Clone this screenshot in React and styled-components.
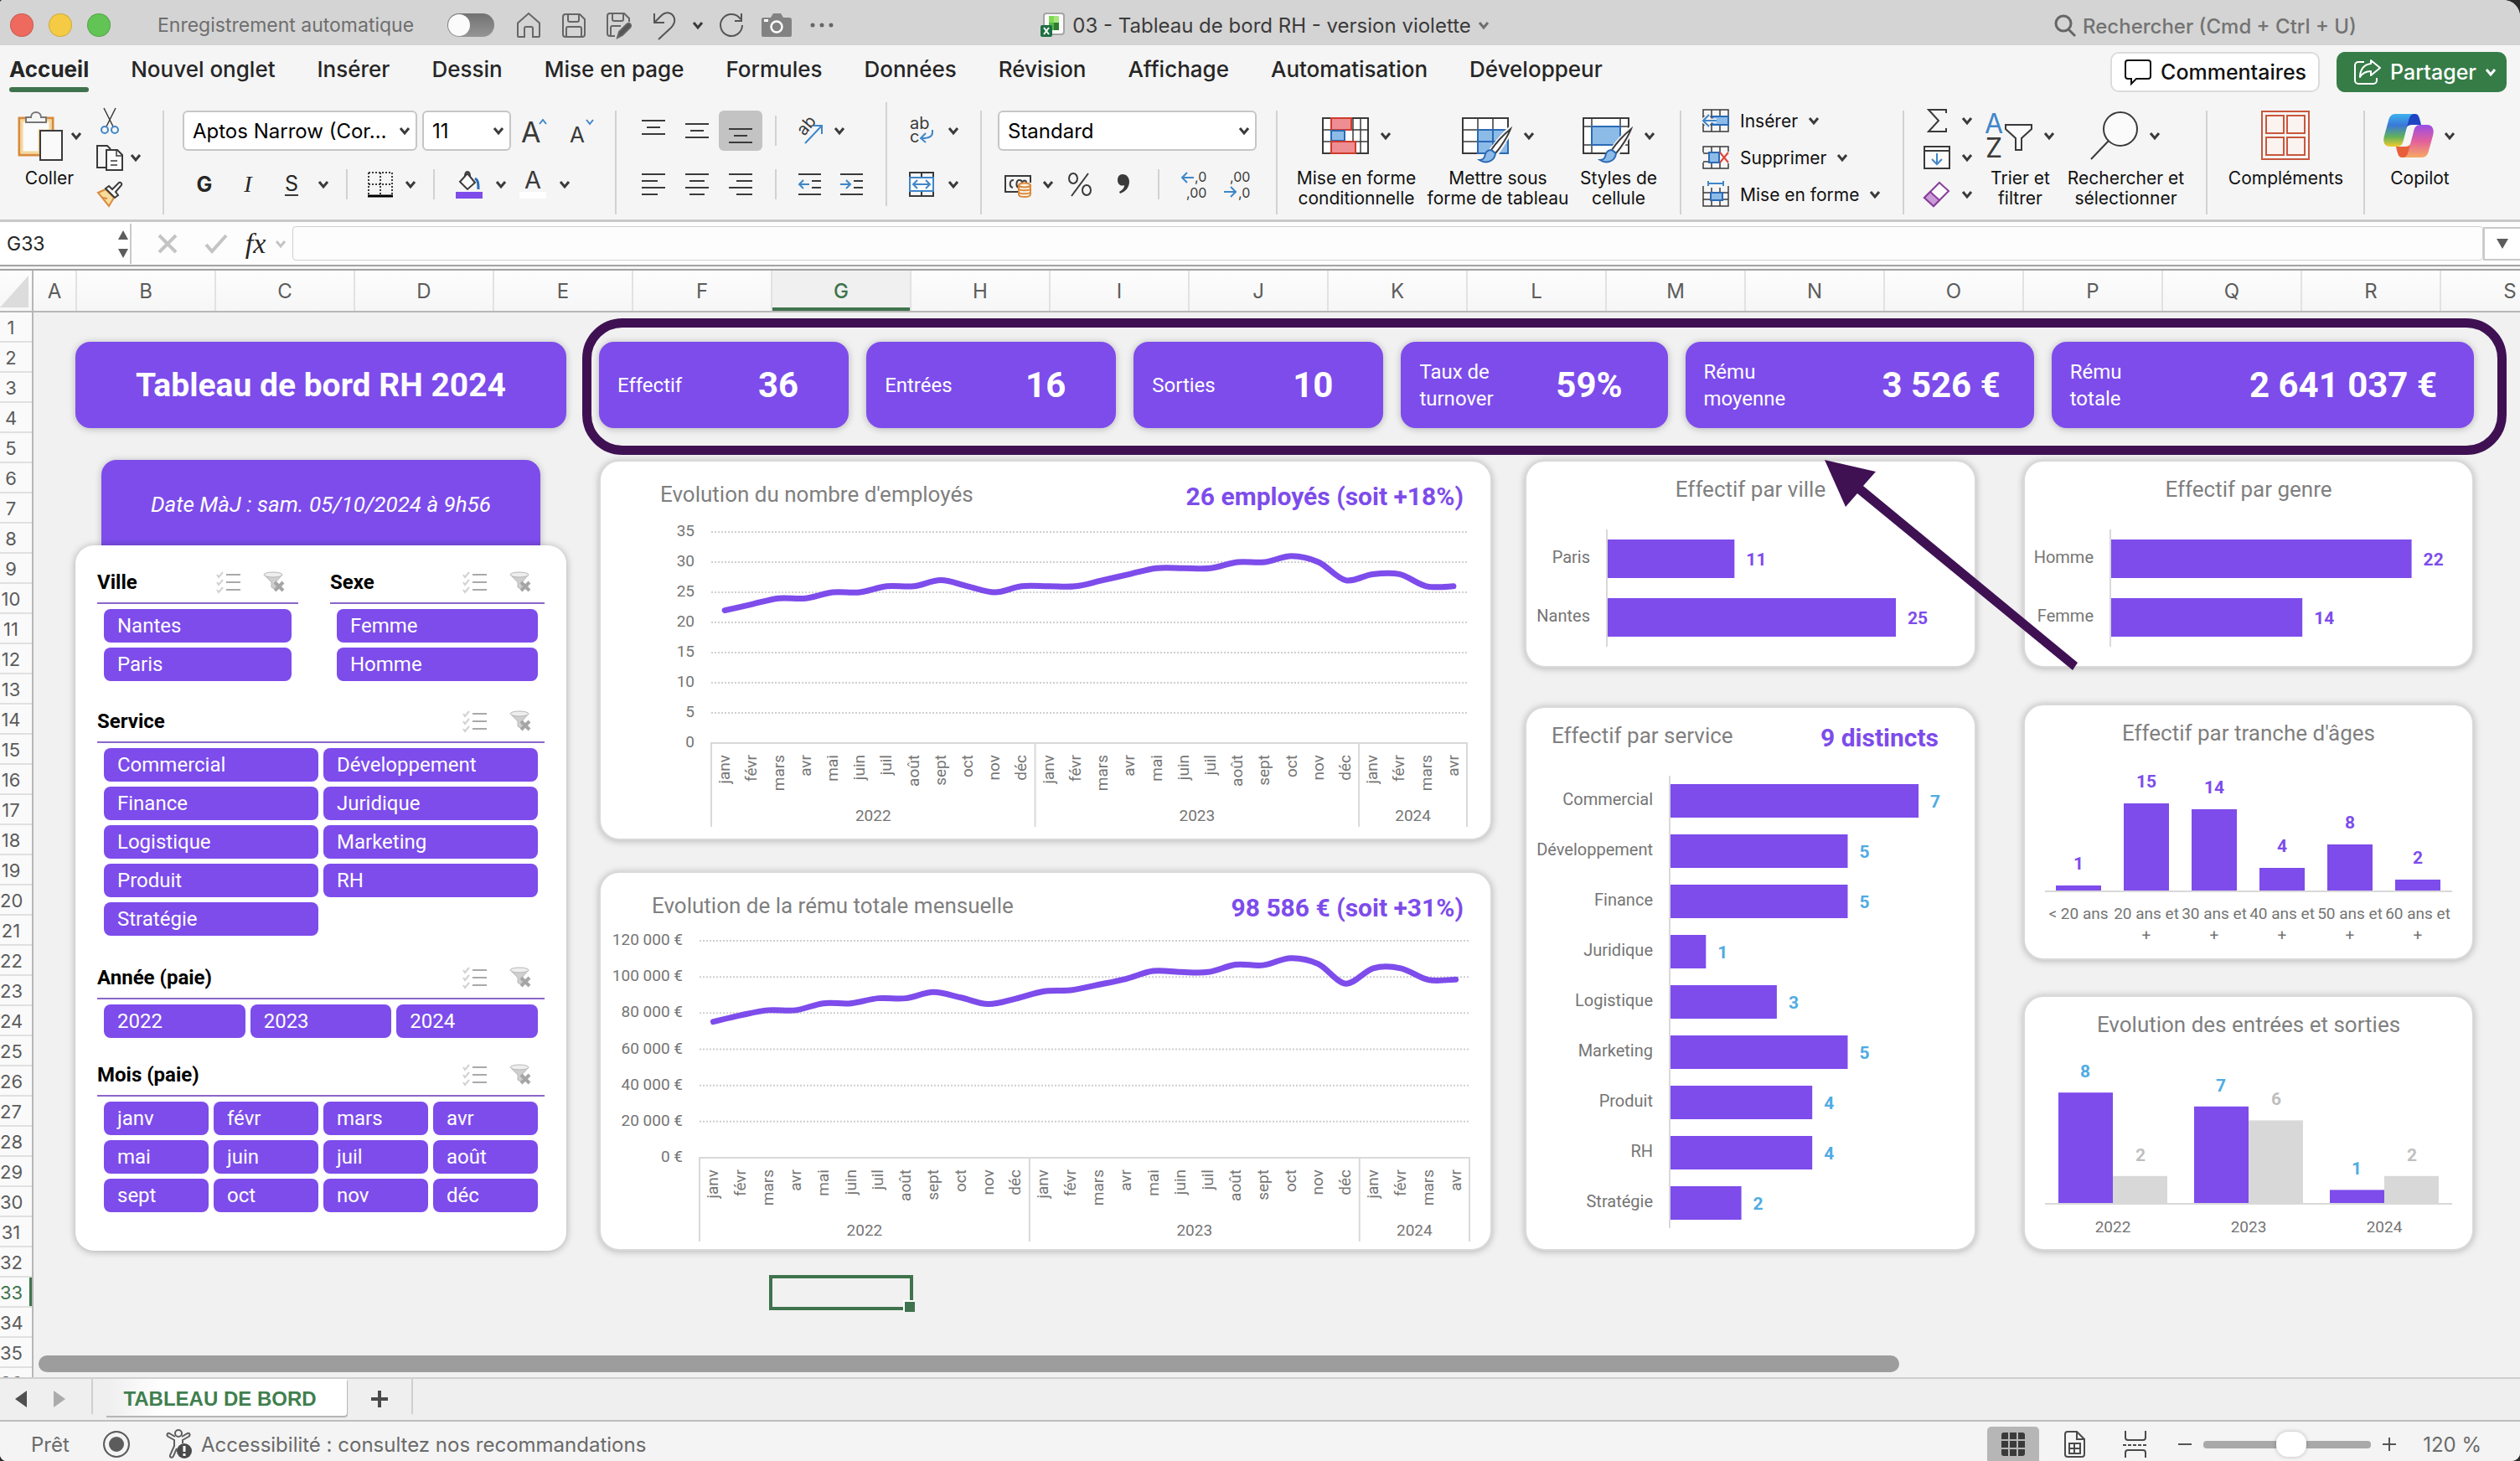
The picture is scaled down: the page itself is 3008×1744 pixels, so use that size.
import { useState } from 'react';
import styled, { createGlobalStyle, css } from 'styled-components';

const colors = {
  purple: '#7d4ceb',
  ring: '#3f1153',
  green: '#367c47',
  cellGreen: '#3f734d',
  blue: '#4fabe3',
  iconBlue: '#3f86c9',
  ink: '#3a3a3a',
  text: '#262626',
  chartText: '#7f7f7f',
  line: '#d9d9d9',
  sheet: '#f1f1f1',
  ribbon: '#f5f5f5',
};

const fonts = {
  ui: "Inter, 'Liberation Sans', sans-serif",
  sheet: "Roboto, 'Liberation Sans', sans-serif",
};

const MONTHS = ['janv', 'févr', 'mars', 'avr', 'mai', 'juin', 'juil', 'août', 'sept', 'oct', 'nov', 'déc'];
const YEARS = [
  { year: '2022', months: 12 },
  { year: '2023', months: 12 },
  { year: '2024', months: 4 },
];

const TABS = [
  'Accueil',
  'Nouvel onglet',
  'Insérer',
  'Dessin',
  'Mise en page',
  'Formules',
  'Données',
  'Révision',
  'Affichage',
  'Automatisation',
  'Développeur',
];

const COLUMNS = 'ABCDEFGHIJKLMNOPQRS'.split('');
const ROWS = Array.from({ length: 36 }, (_, i) => i + 1);

const KPIS = [
  { label: 'Effectif', value: '36' },
  { label: 'Entrées', value: '16' },
  { label: 'Sorties', value: '10' },
  { label: 'Taux de turnover', value: '59%' },
  { label: 'Rému moyenne', value: '3 526 €' },
  { label: 'Rému totale', value: '2 641 037 €' },
];

const EMPLOYEES = [
  22, 23, 24, 24, 25, 25, 26, 26, 27, 26, 25, 26, 26, 26, 27, 28, 29, 29, 29, 30, 30, 31, 30, 27, 28, 28, 26, 26,
];

const PAY = [
  75.2, 78.8, 81.6, 81.6, 85.4, 85.4, 88.2, 88.2, 91.6, 88.6, 85, 88, 92, 92.7, 95.7, 98.9, 103.3, 102.7, 102.7,
  106.8, 106.5, 110.4, 107.2, 96.3, 104.8, 104.8, 98.4, 98.6,
];

/* ---------- icons ---------- */

const IconSvg = styled.svg`
  flex: none;
  overflow: visible;
`;

const Icon = ({ w = 32, h = 32, stroke = colors.ink, sw = 2, children }) => (
  <IconSvg
    width={w}
    height={h}
    viewBox={`0 0 ${w} ${h}`}
    fill="none"
    stroke={stroke}
    strokeWidth={sw}
    aria-hidden="true"
  >
    {children}
  </IconSvg>
);

const IconText = styled.text`
  font-family: ${fonts.ui};
  font-size: ${(p) => p.$size}px;
  font-weight: ${(p) => p.$weight || 400};
  fill: ${(p) => p.$fill || colors.ink};
  stroke: none;
`;

const Chevron = ({ color = colors.ink }) => (
  <Icon w={14} h={12} stroke={color} sw={3}>
    <path d="M2 3l5 6 5-6" />
  </Icon>
);

const HomeIcon = () => (
  <Icon w={32} h={32} stroke="#666">
    <path d="M3 13.500L16 2l13 11.500V29a1 1 0 0 1-1 1h-7V20a2 2 0 0 0-2-2h-6a2 2 0 0 0-2 2v10H4a1 1 0 0 1-1-1z" />
  </Icon>
);

const SaveIcon = () => (
  <Icon w={32} h={32} stroke="#666">
    <path d="M6 3h17l6 6v18a3 3 0 0 1-3 3H6a3 3 0 0 1-3-3V6a3 3 0 0 1 3-3zM9 3v7a2 2 0 0 0 2 2h9a2 2 0 0 0 2-2V3M7 30V20a2 2 0 0 1 2-2h14a2 2 0 0 1 2 2v10" />
  </Icon>
);

const SaveEditIcon = () => (
  <Icon w={34} h={34} stroke="#666">
    <path d="M12 30H6a3 3 0 0 1-3-3V6a3 3 0 0 1 3-3h17l6 6v4M9 3v7a2 2 0 0 0 2 2h9a2 2 0 0 0 2-2V3M7 30V20a2 2 0 0 1 2-2h10" />
    <path d="M15 32l2-7 9-9c3-3 7 1 4 4l-9 9z" fill="#555" />
  </Icon>
);

const UndoIcon = () => (
  <Icon w={30} h={36} stroke="#555">
    <path d="M3 4v11h12M3 15L12 6c5-5 13-3 15 4 1 5-1 8-4 11L8 35" />
  </Icon>
);

const RedoIcon = () => (
  <Icon w={32} h={32} stroke="#555">
    <path d="M28 2v9h-8M29 16a13 13 0 1 1-2-7" />
  </Icon>
);

const CameraIcon = () => (
  <Icon w={38} h={32} stroke="none">
    <path d="M3 7h9l3-5h9l3 5h7a3 3 0 0 1 3 3v18a2 2 0 0 1-2 2H3a2 2 0 0 1-2-2V9a2 2 0 0 1 2-2z" fill="#828282" />
    <circle cx="19" cy="18" r="6.500" stroke="#fff" strokeWidth="2.500" />
    <rect x="4" y="9" width="5" height="3" fill="#fff" />
  </Icon>
);

const EllipsisIcon = () => (
  <Icon w={28} h={8} stroke="none">
    <circle cx="3" cy="4" r="2.500" fill="#666" />
    <circle cx="14" cy="4" r="2.500" fill="#666" />
    <circle cx="25" cy="4" r="2.500" fill="#666" />
  </Icon>
);

const WorkbookIcon = () => (
  <Icon w={30} h={30} stroke="none">
    <rect x="4" y="1" width="24" height="25" rx="3" fill="#fbfbfb" stroke="#a5a5a5" strokeWidth="2" />
    <rect x="10" y="4" width="6" height="8" fill="#7ed957" />
    <rect x="16" y="4" width="6" height="8" fill="#a9e57f" />
    <rect x="10" y="12" width="6" height="9" fill="#54b948" />
    <rect x="16" y="12" width="6" height="9" fill="#2f7d32" />
    <rect x="0" y="15" width="14" height="14" rx="2" fill="#1d6f42" />
    <path d="M4 18l6 8M10 18l-6 8" stroke="#fff" strokeWidth="2" />
  </Icon>
);

const SearchIcon = () => (
  <Icon w={26} h={28} stroke="#666" sw={3}>
    <circle cx="11" cy="11" r="9" />
    <path d="M17 18l8 8" />
  </Icon>
);

const CommentIcon = () => (
  <Icon w={34} h={32} stroke="#111">
    <path d="M5 2h24a3 3 0 0 1 3 3v16a3 3 0 0 1-3 3H15l-6 6v-6H5a3 3 0 0 1-3-3V5a3 3 0 0 1 3-3z" />
  </Icon>
);

const ShareIcon = () => (
  <Icon w={34} h={32} stroke="#fff">
    <path d="M13 4H6a4 4 0 0 0-4 4v18a4 4 0 0 0 4 4h18a4 4 0 0 0 4-4v-3" />
    <path d="M21 2l11 9-11 9v-5c-6 0-10 2-13 7 0-8 4-15 13-16z" strokeLinejoin="round" />
  </Icon>
);

const PasteIcon = () => (
  <Icon w={56} h={60}>
    <path d="M13 9H3v44h24M33 9h10v14" stroke="#d98a3d" strokeWidth="3" />
    <path d="M6 12h34v12H27v26H6z" fill="#fbfbfb" stroke="#f5d79a" strokeWidth="3" />
    <path d="M11 14V8h6c0-8 12-8 12 0h6v6z" fill="#f5f5f5" stroke="#777" />
    <rect x="28" y="24" width="26" height="35" fill="#fafafa" />
  </Icon>
);

const CutIcon = () => (
  <Icon w={24} h={32} sw={1.5}>
    <path d="M5 1l11 22M19 1L8 23" />
    <circle cx="6" cy="27" r="4" stroke={colors.iconBlue} strokeWidth="2" />
    <circle cx="18" cy="27" r="4" stroke={colors.iconBlue} strokeWidth="2" />
  </Icon>
);

const CopyIcon = () => (
  <Icon w={34} h={32}>
    <path d="M12 28H2V2h12l4 4" />
    <path d="M13 7h13l6 6v18H13z" fill="#fbfbfb" />
    <path d="M25 7v7h7M18 20h8M18 25h8" strokeWidth="1.500" />
  </Icon>
);

const PainterIcon = () => (
  <Icon w={34} h={32}>
    <path d="M3 14l9-4 10 10-6 10z" fill="#f7dd9b" stroke="#d98a3d" />
    <path d="M8 20l6 1" stroke="#d98a3d" />
    <path d="M12 9l4-3 4 4 8-8c2-1 4 1 3 3l-7 8 3 4-4 3z" fill="#fbfbfb" />
  </Icon>
);

const GrowFontIcon = () => (
  <Icon w={32} h={32}>
    <IconText x="0" y="30" $size={34}>A</IconText>
    <path d="M22 8l4-5 4 5" stroke={colors.iconBlue} />
  </Icon>
);

const ShrinkFontIcon = () => (
  <Icon w={32} h={32}>
    <IconText x="2" y="30" $size={26}>A</IconText>
    <path d="M22 3l4 5 4-5" stroke={colors.iconBlue} />
  </Icon>
);

const BordersIcon = () => (
  <Icon w={32} h={32}>
    <path d="M2 2h28M2 2v28M30 2v28M16 2v28M2 16h28" strokeDasharray="2 2" />
    <path d="M1 30h30" stroke="#000" strokeWidth="3" />
  </Icon>
);

const FillIcon = () => (
  <Icon w={34} h={34}>
    <path d="M6 14L15 4l9 11-9 8z" fill="#fbfbfb" />
    <path d="M12 8c0-8 6-8 6 0" />
    <path d="M24 10c4 2 4 7 4 13" stroke="#2b6cb8" strokeWidth="3" />
    <rect x="1" y="26" width="32" height="8" fill={colors.purple} stroke="none" />
  </Icon>
);

const FontColorIcon = () => (
  <Icon w={34} h={34}>
    <IconText x="7" y="22" $size={29}>A</IconText>
    <rect x="1" y="26" width="32" height="8" fill="#fff" stroke="none" />
  </Icon>
);

// each entry is [x, width] of a stroke, top to bottom
const LinesIcon = ({ lines, top = 4, step = 8 }) => (
  <Icon w={32} h={32}>
    {lines.map(([x, w], i) => (
      <path key={i} d={`M${x} ${top + i * step}h${w}`} />
    ))}
  </Icon>
);

const OrientationIcon = () => (
  <Icon w={36} h={34}>
    <IconText x="0" y="0" $size={20} transform="translate(12 24) rotate(-50)">ab</IconText>
    <path d="M13 32L33 11M23 11h10v10" stroke={colors.iconBlue} />
  </Icon>
);

const IndentIcon = ({ out }) => (
  <Icon w={30} h={30}>
    <path d="M2 3h27M18 11h11M18 19h11M2 27h27" />
    <path d={out ? 'M15 15H3M8 10l-5 5 5 5' : 'M2 15h12M9 10l5 5-5 5'} stroke={colors.iconBlue} />
  </Icon>
);

const WrapIcon = () => (
  <Icon w={32} h={34}>
    <IconText x="2" y="15" $size={20}>ab</IconText>
    <IconText x="2" y="31" $size={20}>c</IconText>
    <path d="M29 16v3c0 5-4 7-12 7M21 20l-6 6 6 5" stroke={colors.iconBlue} />
  </Icon>
);

const MergeIcon = () => (
  <Icon w={32} h={32}>
    <path d="M2 2h28v28H2zM16 2v6M16 24v6" />
    <rect x="2" y="8" width="28" height="16" fill="#fbfbfb" stroke={colors.iconBlue} />
    <path d="M6 16h20M11 11l-5 5 5 5M21 11l5 5-5 5" stroke={colors.iconBlue} />
  </Icon>
);

const CurrencyIcon = () => (
  <Icon w={34} h={32}>
    <path d="M17 25H2V6h30v8" />
    <path d="M12 11c-5-1-6 8-1 9M18 20c-4-1-3-10 1-9 2 0 3 1 3 3M27 14c0-3-3-3-4-1" />
    <path d="M18 17v11c0 4 14 4 14 0V17" fill="#fbf3e6" stroke="#d98a3d" />
    <ellipse cx="25" cy="17" rx="7" ry="2.500" fill="#fbf3e6" stroke="#d98a3d" />
    <path d="M18 21c0 3 14 3 14 0M18 25c0 3 14 3 14 0" stroke="#d98a3d" />
  </Icon>
);

const PercentIcon = () => (
  <Icon w={32} h={32}>
    <path d="M26 3L6 30" />
    <ellipse cx="8" cy="9" rx="5" ry="6" />
    <ellipse cx="24" cy="23" rx="5" ry="6" />
  </Icon>
);

const CommaIcon = () => (
  <Icon w={18} h={30} stroke="none">
    <path d="M8 3c5 0 8 4 8 9 0 7-5 12-11 14l-1-2c3-2 6-4 6-8-5 2-8-2-8-6 0-4 2-7 6-7z" fill={colors.ink} />
  </Icon>
);

const DecimalIcon = ({ more }) => (
  <Icon w={34} h={34}>
    <IconText x={more ? 18 : 8} y="14" $size={16}>{more ? ',0' : ',00'}</IconText>
    <IconText x={more ? 8 : 18} y="33" $size={16}>{more ? ',00' : ',0'}</IconText>
    <path d={more ? 'M17 9H3M9 3L3 9l6 6' : 'M1 26h14M9 20l6 6-6 6'} stroke={colors.iconBlue} />
  </Icon>
);

const ConditionalIcon = () => (
  <Icon w={58} h={48}>
    <rect x="2" y="3" width="54" height="42" fill="#fff" />
    <path d="M2 17h54M2 31h54M12 3v42M38 3v42M47 3v42" strokeWidth="1.500" />
    <rect x="12" y="3" width="24" height="14" fill="#ee8d92" stroke="#cf3b2e" />
    <rect x="12" y="18" width="16" height="12" fill="#8dbbe8" stroke="#2a6ab5" />
    <rect x="12" y="31" width="29" height="14" fill="#ee8d92" stroke="#cf3b2e" />
  </Icon>
);

const Brush = () => (
  <>
    <path d="M59 15c-6 5-17 18-23 26l6 5c6-9 15-23 18-30z" fill="#fff" stroke="#f5f5f5" strokeWidth="5" />
    <path d="M59 16c-6 5-17 16-23 25l5 4c7-8 15-21 18-29z" fill="#fff" />
    <path d="M36 41c-6 0-7 4-8 8-1 3-3 4-6 4 7 5 18 2 19-8z" fill="#8dbbe8" stroke="#2a6ab5" />
  </>
);

const TableFormatIcon = () => (
  <Icon w={62} h={48}>
    <rect x="2" y="3" width="54" height="42" fill="#fff" />
    <path d="M2 17h54M2 31h54M20 3v42M38 3v42" strokeWidth="1.500" />
    <path d="M20 17h36v28H20z" fill="#8dbbe8" stroke="#2a6ab5" />
    <path d="M20 31h36M38 17v28" stroke="#2a6ab5" />
    <Brush />
  </Icon>
);

const CellStyleIcon = () => (
  <Icon w={62} h={48}>
    <rect x="2" y="3" width="54" height="42" fill="#fff" />
    <path d="M2 13h54M2 35h54M12 3v42M46 3v42" strokeWidth="1.500" />
    <rect x="12" y="13" width="34" height="22" fill="#8dbbe8" stroke="#2a6ab5" />
    <Brush />
  </Icon>
);

const InsertCellsIcon = () => (
  <Icon w={34} h={30}>
    <path d="M2 2h30v26H2zM2 10h30M2 20h30M12 2v26M22 2v26" strokeWidth="1.500" />
    <rect x="13" y="10" width="19" height="10" fill="#8dbbe8" stroke="#2a6ab5" />
    <path d="M18 15H2M9 8l-7 7 7 7" stroke="#f5f5f5" strokeWidth="5" />
    <path d="M18 15H2M9 8l-7 7 7 7" stroke={colors.iconBlue} />
  </Icon>
);

const DeleteCellsIcon = () => (
  <Icon w={34} h={30}>
    <path d="M2 9V2h30v6M2 21v7h30v-6M12 2v7M22 2v7M12 21v7M22 21v7M2 10h10M2 20h10" strokeWidth="1.500" />
    <rect x="9" y="9" width="12" height="12" fill="#8dbbe8" stroke="#2a6ab5" />
    <path d="M22 9l10 12M32 9L22 21" stroke="#d8453b" />
  </Icon>
);

const FormatCellsIcon = () => (
  <Icon w={34} h={32}>
    <path d="M2 6v24h30V6M2 14h30M2 22h30M12 8v22M22 8v22" strokeWidth="1.500" />
    <rect x="11" y="14" width="14" height="9" fill="#8dbbe8" stroke="#2a6ab5" />
    <path d="M8 3h18M8 0v6M26 0v6" stroke={colors.iconBlue} />
  </Icon>
);

const SigmaIcon = () => (
  <Icon w={34} h={32}>
    <path d="M28 7V3H7l12 13L7 29h21v-4" />
  </Icon>
);

const FillDownIcon = () => (
  <Icon w={34} h={30}>
    <path d="M2 2h30v26H2zM2 7h30" fill="#fbfbfb" />
    <path d="M17 10v13M11 17l6 6 6-6" stroke={colors.iconBlue} />
  </Icon>
);

const EraserIcon = () => (
  <Icon w={34} h={32} stroke="#8a3f9c">
    <path d="M20 2l11 10-18 18L2 20z" fill="#fbfbfb" />
    <path d="M9 13l11 10-7 7L2 20z" fill="#cb9bd8" />
  </Icon>
);

const SortIcon = () => (
  <Icon w={58} h={56}>
    <IconText x="0" y="25" $size={32} $fill={colors.iconBlue}>A</IconText>
    <IconText x="1" y="54" $size={32}>Z</IconText>
    <path d="M25 15h31v5L44 31v14h-7V31L25 20z" fill="#fbfbfb" />
  </Icon>
);

const FindIcon = () => (
  <Icon w={58} h={60}>
    <circle cx="36" cy="22" r="20" fill="#fbfbfb" />
    <path d="M22 36L1 58" />
  </Icon>
);

const AddInsIcon = () => (
  <Icon w={58} h={60} stroke="#c9573d">
    <rect x="1" y="1" width="56" height="57" />
    <path d="M6 6h21v21H6zM31 6h21v21H31zM6 32h21v21H6zM31 32h21v21H31z" fill="#fbf3f0" />
  </Icon>
);

const CopilotIcon = () => (
  <Icon w={60} h={54} stroke="none">
    <defs>
      <linearGradient id="copLeft" x1="0" y1="0" x2="0" y2="1">
        <stop offset="0" stopColor="#3bb2ee" />
        <stop offset="0.350" stopColor="#3a78d8" />
        <stop offset="0.700" stopColor="#62b15a" />
        <stop offset="1" stopColor="#f2cb2e" />
      </linearGradient>
      <linearGradient id="copRight" x1="0" y1="0" x2="0" y2="1">
        <stop offset="0" stopColor="#9a4de6" />
        <stop offset="0.500" stopColor="#e2609c" />
        <stop offset="1" stopColor="#f7a964" />
      </linearGradient>
    </defs>
    <path d="M30 1h8c4 0 5 4 7 13H34c-6 0-7 4-8 8z" fill="#1f44c4" />
    <path d="M30 53h-8c-4 0-5-4-7-13h11c6 0 7-4 8-8z" fill="#e8603a" />
    <path d="M14 1h22c-4 1-5 4-6 8l-6 23c-1 5-3 8-8 8H8c-7 0-9-6-7-13l5-18c1-5 4-8 8-8z" fill="url(#copLeft)" />
    <path d="M46 53H24c4-1 5-4 6-8l6-23c1-5 3-8 8-8h8c7 0 9 6 7 13l-5 18c-1 5-4 8-8 8z" fill="url(#copRight)" />
    <path d="M36 15c-4 0-5 3-6 7l-4 17c5-1 6-3 7-7l4-16z" fill="#f5f5f5" />
  </Icon>
);

const ChecklistIcon = () => (
  <Icon w={30} h={26} stroke="#a9a9a9">
    <path d="M12 4h17M12 13h17M12 22h17" />
    <path d="M1 4l2 3 5-6M1 13l2 3 5-6M1 22l2 3 5-6" stroke="#d2d2d2" />
  </Icon>
);

const ClearFilterIcon = () => (
  <Icon w={28} h={26} stroke="#b8b8b8" sw={1}>
    <path d="M2 4c4 3 18 3 22 0l-8 9v9l-5-3v-6z" fill="#cfcfcf" />
    <ellipse cx="13" cy="4" rx="11" ry="3" fill="#eee" />
    <path d="M15 13l10 10M25 13L15 23" stroke="#a5a5a5" strokeWidth="4" />
  </Icon>
);

const AccessibilityIcon = () => (
  <Icon w={32} h={36} stroke="#5f5f5f">
    <circle cx="15" cy="5" r="4" />
    <path d="M11 9L4 5c-2-1-4 2-1 4l7 4v7L5 31c-1 3 3 4 4 1l4-9M19 9l7-4c2-1 4 2 1 4l-7 4v4" />
    <circle cx="22" cy="26" r="9" fill="#4a4a4a" stroke="none" />
    <path d="M22 20v7M22 29v3" stroke="#fff" strokeWidth="3" />
  </Icon>
);

const GridViewIcon = () => (
  <Icon w={30} h={30} stroke="none">
    <path
      d="M4 1h5v8H1V4a3 3 0 0 1 3-3zM11 1h8v8h-8zM21 1h5a3 3 0 0 1 3 3v5h-8zM1 11h8v8H1zM11 11h8v8h-8zM21 11h8v8h-8zM1 21h8v8H4a3 3 0 0 1-3-3zM11 21h8v8h-8zM21 21h8v5a3 3 0 0 1-3 3h-5z"
      fill="#3a3a3a"
    />
  </Icon>
);

const PageViewIcon = () => (
  <Icon w={26} h={34} stroke="#4a4a4a">
    <path d="M4 2h11l9 9v18a3 3 0 0 1-3 3H4a3 3 0 0 1-3-3V5a3 3 0 0 1 3-3zM15 2v9h9" />
    <path d="M6 16h13v12H6zM6 22h13M12 16v12" />
  </Icon>
);

const BreakViewIcon = () => (
  <Icon w={30} h={34} stroke="#4a4a4a">
    <path d="M3 1v8a3 3 0 0 0 3 3h18a3 3 0 0 0 3-3V1M3 33v-6a3 3 0 0 1 3-3h18a3 3 0 0 1 3 3v6" />
    <path d="M0 18h30" strokeDasharray="4 2" />
  </Icon>
);

/* ---------- window ---------- */

const GlobalStyle = createGlobalStyle`
  * {
    box-sizing: border-box;
  }
  body {
    margin: 0;
    background: #2c2c2c;
    font-family: ${fonts.ui};
  }
  button, input, select {
    margin: 0;
    font-family: inherit;
    color: inherit;
  }
`;

const bareButton = css`
  display: flex;
  align-items: center;
  justify-content: center;
  padding: 0;
  border: none;
  background: none;
`;

const Window = styled.div`
  display: flex;
  flex-direction: column;
  height: 100vh;
  overflow: hidden;
  border-radius: 4px 20px 10px 8px;
  background: ${colors.ribbon};
  color: ${colors.text};
`;

const TitleBar = styled.header`
  display: flex;
  align-items: center;
  height: 54px;
  padding: 6px 0 0 12px;
  background: #d4d4d4;
`;

const TitleSide = styled.div`
  display: flex;
  flex: 1 1 0;
  align-items: center;
  min-width: 0;
`;

const Lights = styled.div`
  display: flex;
  gap: 18px;
  margin-right: 56px;
`;

const Light = styled.button`
  width: 28px;
  height: 28px;
  padding: 0;
  border: 1px solid rgba(0, 0, 0, 0.15);
  border-radius: 50%;
  background: ${(p) => p.$color};
`;

const AutoSave = styled.label`
  display: flex;
  align-items: center;
  gap: 40px;
  margin-right: 14px;
  color: #6e6e6e;
  font-size: 23px;
  white-space: nowrap;
`;

const Toggle = styled.input`
  appearance: none;
  width: 56px;
  height: 28px;
  border-radius: 14px;
  background: linear-gradient(#727272, #959595);
  &::before {
    content: '';
    display: block;
    width: 26px;
    height: 26px;
    margin: 1px;
    border-radius: 50%;
    background: #fbfbfb;
  }
`;

const QuickButton = styled.button`
  ${bareButton}
  width: 54px;
  height: 40px;
`;

const QuickChevron = styled.button`
  ${bareButton}
  width: 26px;
  height: 40px;
`;

const DocTitle = styled.button`
  ${bareButton}
  gap: 8px;
  font-size: 24px;
  color: #3b3b3b;
`;

const SearchBox = styled.label`
  display: flex;
  align-items: center;
  gap: 8px;
  margin: 2px 180px 0 auto;
`;

const SearchInput = styled.input`
  width: 342px;
  padding: 0;
  border: none;
  background: none;
  font-size: 24px;
  font-weight: 500;
  &::placeholder {
    color: #737373;
    opacity: 1;
  }
`;

const TabBar = styled.nav`
  display: flex;
  align-items: flex-start;
  height: 61px;
  padding: 8px 16px 0 11px;
`;

const RibbonTab = styled.button`
  ${bareButton}
  flex-direction: column;
  margin-right: 50px;
  font-size: 26px;
  font-weight: ${(p) => (p.$active ? 700 : 500)};
  line-height: 42px;
  &::after {
    content: '';
    width: 100%;
    height: 6px;
    border-radius: 3px;
    background: ${(p) => (p.$active ? '#3f734d' : 'transparent')};
  }
`;

const TabActions = styled.div`
  display: flex;
  gap: 20px;
  margin-left: auto;
`;

const ActionButton = styled.button`
  ${bareButton}
  gap: 10px;
  height: 48px;
  padding: 0 ${(p) => (p.$primary ? 10 : 14)}px 0 ${(p) => (p.$primary ? 18 : 14)}px;
  border: 2px solid ${(p) => (p.$primary ? colors.green : '#dcdcdc')};
  border-radius: 10px;
  background: ${(p) => (p.$primary ? colors.green : '#fff')};
  color: ${(p) => (p.$primary ? '#fff' : '#111')};
  font-size: 25px;
  font-weight: 500;
`;

/* ---------- ribbon ---------- */

const Ribbon = styled.div`
  display: flex;
  align-items: flex-start;
  height: 147px;
  padding-top: 7px;
`;

const Group = styled.div`
  display: flex;
  flex: none;
  gap: ${(p) => p.$gap || 0}px;
  padding: ${(p) => (p.$tall ? 0 : 10)}px ${(p) => p.$right || 0}px 0 ${(p) => p.$left || 0}px;
`;

const GroupLine = styled.div`
  flex: none;
  width: 2px;
  height: 124px;
  margin-top: ${(p) => (p.$raised ? 0 : 10)}px;
  background: #d2d2d2;
`;

const Stack = styled.div`
  display: flex;
  flex-direction: column;
  gap: ${(p) => p.$gap || 0}px;
  ${(p) => p.$raised && 'margin-top: -10px;'}
`;

const ToolRow = styled.div`
  display: flex;
  align-items: center;
  height: ${(p) => (p.$short ? 44 : 48)}px;
`;

const ToolLine = styled.div`
  width: 2px;
  height: 36px;
  margin: 0 15px;
  background: #d2d2d2;
`;

const Tool = styled.button`
  ${bareButton}
  width: ${(p) => p.$w || 52}px;
  height: 48px;
  border-radius: 6px;
  background: ${(p) => (p.$active ? '#c3c3c3' : 'none')};
  font-size: 25px;
`;

const Drop = styled.button`
  ${bareButton}
  width: 24px;
  height: 40px;
`;

const Bold = styled.b`
  font-weight: 700;
`;

const Italic = styled.i`
  font-family: 'Liberation Serif', serif;
  font-size: 28px;
`;

const Underlined = styled.span`
  border-bottom: 2px solid ${colors.ink};
  line-height: 26px;
`;

const SelectWrap = styled.label`
  position: relative;
  width: ${(p) => p.$w}px;
  margin-right: ${(p) => p.$gap || 0}px;
  svg {
    position: absolute;
    right: 8px;
    top: 18px;
    pointer-events: none;
  }
`;

const Select = styled.select`
  appearance: none;
  width: 100%;
  height: 48px;
  padding: 0 10px;
  border: 2px solid #c6c6c6;
  border-radius: 6px;
  background: #fff;
  color: #000;
  font-size: 24px;
`;

const BigTool = styled.button`
  ${bareButton}
  flex-direction: column;
  justify-content: flex-start;
  gap: 9px;
  min-width: ${(p) => p.$w || 72}px;
  color: #111;
  font-size: 21px;
  line-height: 24px;
`;

const BigIcon = styled.span`
  display: flex;
  align-items: center;
  gap: ${(p) => p.$gap || 12}px;
  height: 60px;
`;

const SmallTool = styled.button`
  ${bareButton}
  gap: 12px;
  height: 44px;
  justify-content: flex-start;
  color: #111;
  font-size: 21px;
`;

/* ---------- formula bar ---------- */

const FormulaBar = styled.div`
  display: flex;
  align-items: center;
  height: 56px;
  border-top: 3px solid #c9c9c9;
  border-bottom: 2px solid #a3a3a3;
  background: #fdfdfd;
`;

const NameBox = styled.div`
  display: flex;
  align-items: center;
  width: 157px;
  height: 48px;
  border-right: 2px solid #c9c9c9;
  background: #fff;
`;

const NameInput = styled.input`
  width: 140px;
  padding: 0 8px;
  border: none;
  font-size: 23px;
`;

const FormulaTools = styled.div`
  display: flex;
  align-items: center;
  width: 192px;
  padding-left: 14px;
`;

const FormulaTool = styled.button`
  ${bareButton}
  width: ${(p) => p.$w || 58}px;
  height: 40px;
  font-family: 'Liberation Serif', serif;
  font-size: 34px;
  font-style: italic;
`;

const FormulaInput = styled.input`
  flex: 1;
  height: 41px;
  border: 1px solid #cfcfcf;
  border-radius: 4px;
  background: #fdfdfd;
  font-size: 23px;
`;

const ExpandButton = styled.button`
  ${bareButton}
  width: 44px;
  height: 40px;
  border: 2px solid #c9c9c9;
  border-right: none;
  background: #fff;
`;

/* ---------- worksheet ---------- */

const ColumnHeads = styled.div`
  display: flex;
  height: 52px;
  margin-top: 3px;
  overflow: hidden;
  border-top: 2px solid #a3a3a3;
  border-bottom: 2px solid #b7b7b7;
  background: linear-gradient(#fdfdfd, #f6f6f6);
`;

const Corner = styled.div`
  display: flex;
  align-items: flex-end;
  justify-content: flex-end;
  flex: none;
  width: 40px;
  padding: 0 4px 4px 0;
  border-right: 2px solid #b7b7b7;
`;

const ColumnHead = styled.div`
  flex: none;
  width: ${(p) => (p.$narrow ? 52 : 166)}px;
  border-right: 2px solid #e2e2e2;
  color: ${(p) => (p.$active ? colors.cellGreen : '#5c5c5c')};
  font-size: 24px;
  font-weight: ${(p) => (p.$active ? 500 : 400)};
  line-height: 49px;
  text-align: center;
  ${(p) => p.$active && `background: #f0f0f0; box-shadow: inset 0 -4px ${colors.cellGreen};`}
`;

const SheetArea = styled.div`
  display: flex;
  flex: 1;
  min-height: 0;
  overflow: hidden;
  background: ${colors.sheet};
`;

const RowHeads = styled.div`
  flex: none;
  width: 40px;
  border-right: 2px solid #b7b7b7;
  background: #fafafa;
`;

const RowHead = styled.div`
  height: 36px;
  padding-right: 12px;
  border-bottom: 2px solid #e0e0e0;
  color: ${(p) => (p.$active ? colors.cellGreen : '#5c5c5c')};
  font-size: 22px;
  line-height: 36px;
  text-align: center;
  ${(p) => p.$active && `box-shadow: inset -3px 0 ${colors.cellGreen};`}
`;

const Cells = styled.main`
  position: relative;
  display: flex;
  flex: 1;
  flex-direction: column;
  gap: 38px;
  min-width: 0;
  padding: 35px 55px 0 50px;
  font-family: ${fonts.sheet};
`;

const ActiveCell = styled.div`
  position: absolute;
  left: 878px;
  top: 1149px;
  width: 172px;
  height: 42px;
  border: 4px solid ${colors.cellGreen};
  &::after {
    content: '';
    position: absolute;
    right: -6px;
    bottom: -6px;
    width: 12px;
    height: 12px;
    border: 2px solid #fff;
    border-right: none;
    border-bottom: none;
    background: ${colors.cellGreen};
  }
`;

const ScrollThumb = styled.div`
  position: absolute;
  left: 6px;
  right: 741px;
  bottom: 6px;
  height: 20px;
  border-radius: 10px;
  background: #9d9d9d;
`;

const TopRow = styled.div`
  display: flex;
  gap: 39px;
`;

const purpleBlock = css`
  border-radius: 18px;
  background: ${colors.purple};
  box-shadow: 0 1px 8px rgba(0, 0, 0, 0.25);
  color: #fff;
`;

const TitleCard = styled.h1`
  ${purpleBlock}
  display: flex;
  flex: 586 1 0;
  align-items: center;
  justify-content: center;
  height: 103px;
  margin: 0;
  font-size: 39px;
  font-weight: 700;
`;

const KpiStrip = styled.section`
  position: relative;
  display: grid;
  flex: 2238 1 0;
  grid-template-columns: 298fr 298fr 298fr 318fr 416fr 504fr;
  gap: 21px;
`;

const KpiCard = styled.div`
  ${purpleBlock}
  display: flex;
  align-items: center;
  justify-content: space-between;
  padding: 0 ${(p) => p.$right}px 0 22px;
`;

const KpiLabel = styled.span`
  max-width: 100px;
  font-size: 24px;
  line-height: 32px;
`;

const KpiValue = styled.strong`
  font-size: 42px;
  font-weight: 700;
  white-space: nowrap;
`;

const KpiRing = styled.div`
  position: absolute;
  inset: -28px -39px -32px -20px;
  border: 11px solid ${colors.ring};
  border-radius: 48px;
`;

const KpiArrow = styled.svg`
  position: absolute;
  z-index: 2;
  right: 463px;
  top: 132px;
`;

const Board = styled.div`
  display: flex;
  gap: 39px;
`;

const Column = styled.div`
  display: flex;
  flex: ${(p) => p.$grow} 1 0;
  flex-direction: column;
  justify-content: space-between;
  min-width: 0;
  height: 944px;
  margin-left: ${(p) => p.$left || 0}px;
`;

const DateBanner = styled.div`
  ${purpleBlock}
  display: flex;
  align-items: center;
  justify-content: center;
  height: 102px;
  margin: 0 31px;
  padding-top: 4px;
  border-radius: 18px 18px 0 0;
  font-size: 26px;
  font-style: italic;
`;

const FilterPanel = styled.section`
  position: relative;
  flex: 1;
  padding: 20px 26px 0;
  border-radius: 22px;
  background: #fff;
  box-shadow: 0 1px 10px rgba(0, 0, 0, 0.3);
`;

const SlicerPair = styled.div`
  display: grid;
  grid-template-columns: 240fr 256fr;
  gap: 38px;
`;

const SlicerBox = styled.fieldset`
  min-width: 0;
  margin: 0 0 ${(p) => p.$after || 0}px;
  padding: 0;
  border: none;
`;

const SlicerHead = styled.div`
  display: flex;
  align-items: center;
  gap: 12px;
  height: 50px;
  padding-right: 8px;
  border-bottom: 2px solid #8a66c9;
`;

const SlicerTitle = styled.span`
  flex: 1;
  color: #000;
  font-size: 24px;
  font-weight: 700;
`;

const SlicerAction = styled.button`
  ${bareButton}
  width: 42px;
  height: 36px;
`;

const SlicerItems = styled.div`
  display: grid;
  grid-template-columns: repeat(${(p) => p.$cols}, 1fr);
  gap: 6px;
  padding: 6px 8px 0;
`;

const SlicerItem = styled.button`
  height: 40px;
  padding: 0 16px;
  border: none;
  border-radius: 8px;
  background: ${colors.purple};
  color: #fff;
  font-size: 24px;
  text-align: left;
`;

/* ---------- charts ---------- */

const ChartCard = styled.section`
  height: ${(p) => p.$h}px;
  border: 2px solid ${colors.line};
  border-radius: 24px;
  background: #fff;
  box-shadow: 0 1px 8px rgba(0, 0, 0, 0.25);
`;

const ChartHead = styled.div`
  display: flex;
  align-items: center;
  justify-content: ${(p) => (p.$spread ? 'space-between' : 'center')};
  height: 66px;
  padding: ${(p) => p.$top || 0}px ${(p) => p.$right || 0}px 0 ${(p) => p.$left || 0}px;
`;

const ChartTitle = styled.h2`
  margin: 0;
  color: ${colors.chartText};
  font-size: 26px;
  font-weight: 400;
`;

const Callout = styled.strong`
  padding-top: 4px;
  color: ${colors.purple};
  font-size: 30px;
  font-weight: 700;
`;

const Plot = styled.svg`
  display: block;
  width: 100%;
`;

const AxisText = styled.text`
  font-family: ${fonts.sheet};
  font-size: ${(p) => p.$size || 19}px;
  fill: #757575;
  text-anchor: ${(p) => p.$anchor || 'middle'};
`;

const DataText = styled.text`
  font-family: ${fonts.sheet};
  font-size: 21px;
  font-weight: 700;
  fill: ${(p) => p.$fill};
  text-anchor: ${(p) => p.$anchor || 'middle'};
`;

// Catmull-Rom spline through the points, as cubic beziers
const smoothPath = (pts) =>
  pts.slice(1).reduce((d, p, i) => {
    const p0 = pts[Math.max(i - 1, 0)];
    const p1 = pts[i];
    const p3 = pts[Math.min(i + 2, pts.length - 1)];
    const c1 = [p1[0] + (p[0] - p0[0]) / 6, p1[1] + (p[1] - p0[1]) / 6];
    const c2 = [p[0] - (p3[0] - p1[0]) / 6, p[1] - (p3[1] - p1[1]) / 6];
    return `${d}C${c1} ${c2} ${p}`;
  }, `M${pts[0]}`);

function LineChart({ data, ticks, max, left, right, top, bottom, height, label }) {
  const step = (right - left) / data.length;
  const y = (v) => bottom - (v / max) * (bottom - top);
  const points = data.map((v, i) => [left + step * (i + 0.5), y(v)]);
  let offset = 0;
  const spans = YEARS.map(({ year, months }) => {
    const span = { year, from: left + offset * step, to: left + (offset + months) * step };
    offset += months;
    return span;
  });

  return (
    <Plot viewBox={`0 0 1062 ${height}`} role="img" aria-label={label}>
      {ticks.map(([value, text]) => (
        <g key={text}>
          {value > 0 && (
            <path d={`M${left} ${y(value)}H${right}`} stroke="#cfcfcf" strokeWidth="2" strokeDasharray="2 2" />
          )}
          <AxisText x={left - 20} y={y(value) + 5} $anchor="end">{text}</AxisText>
        </g>
      ))}
      <path
        d={`M${left} ${bottom + 100}V${bottom}H${right}V${bottom + 100}`}
        fill="none"
        stroke={colors.line}
        strokeWidth="2"
      />
      {spans.map(({ year, from, to }) => (
        <g key={year}>
          <path d={`M${from} ${bottom}v100`} stroke={colors.line} strokeWidth="2" />
          <AxisText x={(from + to) / 2} y={bottom + 93}>{year}</AxisText>
        </g>
      ))}
      {points.map(([x], i) => (
        <AxisText key={i} $anchor="end" transform={`translate(${x + 6} ${bottom + 14}) rotate(-90)`}>
          {MONTHS[i % 12]}
        </AxisText>
      ))}
      <path d={smoothPath(points)} fill="none" stroke={colors.purple} strokeWidth="7" strokeLinecap="round" />
    </Plot>
  );
}

function BarChart({ rows, width, height, axis, top, pitch, bar, unit, tone, label }) {
  const pad = (pitch - bar) / 2;
  return (
    <Plot viewBox={`0 0 ${width} ${height}`} role="img" aria-label={label}>
      <path d={`M${axis} ${top}v${pitch * rows.length}`} stroke={colors.line} strokeWidth="2" />
      {rows.map(([name, value], i) => {
        const y = top + pitch * i + pad;
        return (
          <g key={name}>
            <rect x={axis + 1} y={y} width={value * unit} height={bar} fill={colors.purple} />
            <AxisText x={axis - 20} y={y + bar / 2 + 5} $anchor="end" $size={20}>{name}</AxisText>
            <DataText x={axis + value * unit + 15} y={y + bar / 2 + 8} $anchor="start" $fill={tone}>
              {value}
            </DataText>
          </g>
        );
      })}
    </Plot>
  );
}

const AGES = [
  ['< 20 ans', 1],
  ['20 ans et', 15],
  ['30 ans et', 14],
  ['40 ans et', 4],
  ['50 ans et', 8],
  ['60 ans et', 2],
];

function AgeChart() {
  return (
    <Plot viewBox="0 0 534 236" role="img" aria-label="Effectif par tranche d'âges">
      {AGES.map(([name, value], i) => {
        const x = 64 + i * 81;
        const h = value * 7;
        return (
          <g key={name}>
            <rect x={x - 27} y={156 - h} width="54" height={h} fill={colors.purple} />
            <DataText x={x} y={156 - h - 19} $fill={colors.purple}>{value}</DataText>
            <AxisText x={x} y="189">{name}</AxisText>
            {i > 0 && <AxisText x={x} y="215">+</AxisText>}
          </g>
        );
      })}
      <path d="M24 156h486" stroke={colors.line} strokeWidth="2" />
    </Plot>
  );
}

const MOVES = [
  ['2022', 8, 2],
  ['2023', 7, 6],
  ['2024', 1, 2],
];

function MovesChart() {
  return (
    <Plot viewBox="0 0 534 234" role="img" aria-label="Evolution des entrées et sorties">
      {MOVES.map(([year, entries, exits], i) => {
        const x = 105 + i * 162;
        const up = entries * 16.6;
        const down = exits * 16.6;
        return (
          <g key={year}>
            <rect x={x - 65} y={181 - up} width="65" height={up} fill={colors.purple} />
            <rect x={x} y={181 - down} width="65" height={down} fill="#d8d8d8" />
            <DataText x={x - 33} y={181 - up - 18} $fill={colors.blue}>{entries}</DataText>
            <DataText x={x + 33} y={181 - down - 18} $fill="#bfbfbf">{exits}</DataText>
            <AxisText x={x} y="215">{year}</AxisText>
          </g>
        );
      })}
      <path d="M24 181h486" stroke={colors.line} strokeWidth="2" />
    </Plot>
  );
}

/* ---------- bottom bars ---------- */

const SheetTabs = styled.div`
  display: flex;
  height: 53px;
  border-top: 2px solid #cfcfcf;
  border-bottom: 2px solid #bdbdbd;
  background: #efefef;
`;

const TabArrows = styled.div`
  display: flex;
  gap: 28px;
  width: 109px;
  padding-left: 16px;
`;

const TabArrow = styled.button`
  ${bareButton}
  width: 18px;
  height: 48px;
`;

const TabLine = styled.div`
  width: 2px;
  height: 42px;
  background: #cfcfcf;
`;

const SheetTab = styled.button`
  width: 303px;
  height: 44px;
  padding: 3px 0 0;
  border: none;
  border-radius: 0 0 4px 0;
  background: linear-gradient(90deg, #efefef 6%, #fff 28%);
  box-shadow: 1px 2px 1px rgba(0, 0, 0, 0.25);
  clip-path: inset(0 -4px -4px 16px);
  color: #3f7f4f;
  font-family: 'Liberation Sans', sans-serif;
  font-size: 24px;
  font-weight: 700;
`;

const AddTab = styled.button`
  ${bareButton}
  width: 77px;
  height: 48px;
`;

const StatusBar = styled.footer`
  display: flex;
  align-items: center;
  height: 47px;
  padding: 7px 46px 0 37px;
  background: #f4f4f4;
  color: #6a6a6a;
  font-size: 24px;
`;

const Ready = styled.span`
  width: 86px;
`;

const StatusButton = styled.button`
  ${bareButton}
  gap: 10px;
  margin-right: 43px;
  font-size: inherit;
`;

const Record = styled.span`
  width: 32px;
  height: 32px;
  border: 2px solid #5c5c5c;
  border-radius: 50%;
  background: #5c5c5c;
  box-shadow: inset 0 0 0 5px #f4f4f4;
`;

const StatusRight = styled.div`
  display: flex;
  align-items: center;
  margin-left: auto;
`;

const ViewButton = styled.button`
  ${bareButton}
  width: 62px;
  height: 42px;
  margin-right: ${(p) => p.$gap}px;
  border-radius: 5px 5px 0 0;
  background: ${(p) => (p.$active ? '#b6b6b6' : 'none')};
`;

const ZoomButton = styled.button`
  ${bareButton}
  width: 44px;
  height: 40px;
`;

const ZoomSlider = styled.input`
  appearance: none;
  width: 200px;
  height: 9px;
  border-radius: 4px;
  background: #a9a9a9;
  &::-webkit-slider-thumb {
    appearance: none;
    width: 36px;
    height: 30px;
    border-radius: 14px;
    background: #fff;
    box-shadow: 0 0 5px rgba(0, 0, 0, 0.25);
  }
`;

const ZoomLevel = styled.span`
  width: 88px;
  text-align: right;
  white-space: nowrap;
`;

/* ---------- pieces ---------- */

const DropButton = ({ label }) => (
  <Drop aria-label={label}>
    <Chevron />
  </Drop>
);

function Slicer({ title, items, cols, after }) {
  return (
    <SlicerBox $after={after} aria-label={title}>
      <SlicerHead>
        <SlicerTitle>{title}</SlicerTitle>
        <SlicerAction aria-label="Sélection multiple">
          <ChecklistIcon />
        </SlicerAction>
        <SlicerAction aria-label="Effacer le filtre">
          <ClearFilterIcon />
        </SlicerAction>
      </SlicerHead>
      <SlicerItems $cols={cols}>
        {items.map((item) => (
          <SlicerItem key={item}>{item}</SlicerItem>
        ))}
      </SlicerItems>
    </SlicerBox>
  );
}

function TopBar() {
  return (
    <TitleBar>
      <TitleSide>
        <Lights>
          <Light $color="#ee6a5f" aria-label="Fermer" />
          <Light $color="#f5cb45" aria-label="Réduire" />
          <Light $color="#61c454" aria-label="Agrandir" />
        </Lights>
        <AutoSave>
          Enregistrement automatique
          <Toggle type="checkbox" />
        </AutoSave>
        <QuickButton aria-label="Accueil"><HomeIcon /></QuickButton>
        <QuickButton aria-label="Enregistrer"><SaveIcon /></QuickButton>
        <QuickButton aria-label="Enregistrer sous"><SaveEditIcon /></QuickButton>
        <QuickButton aria-label="Annuler"><UndoIcon /></QuickButton>
        <QuickChevron aria-label="Historique"><Chevron /></QuickChevron>
        <QuickButton aria-label="Rétablir"><RedoIcon /></QuickButton>
        <QuickButton aria-label="Capture"><CameraIcon /></QuickButton>
        <QuickButton aria-label="Plus"><EllipsisIcon /></QuickButton>
      </TitleSide>
      <DocTitle>
        <WorkbookIcon />
        03 - Tableau de bord RH - version violette
        <Chevron color="#6e6e6e" />
      </DocTitle>
      <TitleSide>
        <SearchBox>
          <SearchIcon />
          <SearchInput placeholder="Rechercher (Cmd + Ctrl + U)" aria-label="Rechercher" />
        </SearchBox>
      </TitleSide>
    </TitleBar>
  );
}

function RibbonTools() {
  return (
    <Ribbon>
      <Group $left={12} $right={20} $gap={6}>
        <BigTool $w={94}>
          <BigIcon $gap={8}><PasteIcon /><Chevron /></BigIcon>
          Coller
        </BigTool>
        <Stack $raised>
          <ToolRow $short><Tool $w={38} aria-label="Couper"><CutIcon /></Tool></ToolRow>
          <ToolRow $short>
            <Tool $w={38} aria-label="Copier"><CopyIcon /></Tool>
            <DropButton label="Options de copie" />
          </ToolRow>
          <ToolRow $short><Tool $w={38} aria-label="Reproduire la mise en forme"><PainterIcon /></Tool></ToolRow>
        </Stack>
      </Group>
      <GroupLine />

      <Group $left={22} $right={12}>
        <Stack $gap={16}>
          <ToolRow>
            <SelectWrap $w={280} $gap={6}>
              <Select aria-label="Police" defaultValue="a">
                <option value="a">Aptos Narrow (Cor…</option>
              </Select>
              <Chevron />
            </SelectWrap>
            <SelectWrap $w={106}>
              <Select aria-label="Taille" defaultValue="11">
                <option>11</option>
              </Select>
              <Chevron />
            </SelectWrap>
            <Tool $w={56} aria-label="Augmenter la taille"><GrowFontIcon /></Tool>
            <Tool $w={56} aria-label="Réduire la taille"><ShrinkFontIcon /></Tool>
          </ToolRow>
          <ToolRow>
            <Tool><Bold>G</Bold></Tool>
            <Tool><Italic>I</Italic></Tool>
            <Tool><Underlined>S</Underlined></Tool>
            <DropButton label="Soulignement" />
            <ToolLine />
            <Tool $w={48} aria-label="Bordures"><BordersIcon /></Tool>
            <DropButton label="Types de bordures" />
            <ToolLine />
            <Tool aria-label="Remplissage"><FillIcon /></Tool>
            <DropButton label="Couleur de remplissage" />
            <Tool aria-label="Couleur de police"><FontColorIcon /></Tool>
            <DropButton label="Couleurs de police" />
          </ToolRow>
        </Stack>
      </Group>
      <GroupLine />

      <Group $left={18}>
        <Stack $gap={16}>
          <ToolRow>
            <Tool aria-label="Aligner en haut"><LinesIcon lines={[[2, 28], [8, 16], [2, 28]]} /></Tool>
            <Tool aria-label="Aligner au centre"><LinesIcon top={8} lines={[[2, 28], [8, 16], [2, 28]]} /></Tool>
            <Tool $active aria-label="Aligner en bas"><LinesIcon top={14} lines={[[2, 28], [8, 16], [2, 28]]} /></Tool>
            <ToolLine />
            <Tool $w={48} aria-label="Orientation"><OrientationIcon /></Tool>
            <DropButton label="Options d'orientation" />
          </ToolRow>
          <ToolRow>
            <Tool aria-label="Aligner à gauche"><LinesIcon lines={[[2, 28], [2, 19], [2, 28], [2, 19]]} /></Tool>
            <Tool aria-label="Centrer"><LinesIcon lines={[[2, 28], [7, 18], [2, 28], [7, 18]]} /></Tool>
            <Tool aria-label="Aligner à droite"><LinesIcon lines={[[2, 28], [11, 19], [2, 28], [11, 19]]} /></Tool>
            <ToolLine />
            <Tool $w={48} aria-label="Diminuer le retrait"><IndentIcon out /></Tool>
            <Tool aria-label="Augmenter le retrait"><IndentIcon /></Tool>
          </ToolRow>
        </Stack>
      </Group>
      <Group $left={15} $right={15} $tall>
        <GroupLine $raised />
      </Group>
      <Group $right={20}>
        <Stack $gap={16}>
          <ToolRow>
            <Tool aria-label="Renvoyer à la ligne"><WrapIcon /></Tool>
            <DropButton label="Options de renvoi" />
          </ToolRow>
          <ToolRow>
            <Tool aria-label="Fusionner"><MergeIcon /></Tool>
            <DropButton label="Options de fusion" />
          </ToolRow>
        </Stack>
      </Group>
      <GroupLine />

      <Group $left={19} $right={20}>
        <Stack $gap={16}>
          <ToolRow>
            <SelectWrap $w={309}>
              <Select aria-label="Format de nombre" defaultValue="Standard">
                <option>Standard</option>
              </Select>
              <Chevron />
            </SelectWrap>
          </ToolRow>
          <ToolRow>
            <Tool $w={48} aria-label="Format monétaire"><CurrencyIcon /></Tool>
            <DropButton label="Devises" />
            <Tool aria-label="Pourcentage"><PercentIcon /></Tool>
            <Tool aria-label="Séparateur de milliers"><CommaIcon /></Tool>
            <ToolLine />
            <Tool aria-label="Ajouter une décimale"><DecimalIcon more /></Tool>
            <Tool aria-label="Réduire les décimales"><DecimalIcon /></Tool>
          </ToolRow>
        </Stack>
      </Group>
      <GroupLine />

      <Group $left={22} $right={26} $gap={12}>
        <BigTool $w={144}>
          <BigIcon><ConditionalIcon /><Chevron /></BigIcon>
          <span>Mise en forme<br />conditionnelle</span>
        </BigTool>
        <BigTool $w={170}>
          <BigIcon><TableFormatIcon /><Chevron /></BigIcon>
          <span>Mettre sous<br />forme de tableau</span>
        </BigTool>
        <BigTool $w={94}>
          <BigIcon><CellStyleIcon /><Chevron /></BigIcon>
          <span>Styles de<br />cellule</span>
        </BigTool>
      </Group>
      <GroupLine />

      <Group $left={24} $right={26} $tall>
        <Stack>
          <SmallTool><InsertCellsIcon />Insérer<Chevron /></SmallTool>
          <SmallTool><DeleteCellsIcon />Supprimer<Chevron /></SmallTool>
          <SmallTool><FormatCellsIcon />Mise en forme<Chevron /></SmallTool>
        </Stack>
      </Group>
      <GroupLine />

      <Group $left={22} $right={26} $gap={14}>
        <Stack $raised>
          <SmallTool aria-label="Somme automatique"><SigmaIcon /><Chevron /></SmallTool>
          <SmallTool aria-label="Recopier"><FillDownIcon /><Chevron /></SmallTool>
          <SmallTool aria-label="Effacer"><EraserIcon /><Chevron /></SmallTool>
        </Stack>
        <BigTool $w={84}>
          <BigIcon><SortIcon /><Chevron /></BigIcon>
          <span>Trier et<br />filtrer</span>
        </BigTool>
        <BigTool $w={140}>
          <BigIcon><FindIcon /><Chevron /></BigIcon>
          <span>Rechercher et<br />sélectionner</span>
        </BigTool>
      </Group>
      <GroupLine />

      <Group $left={22} $right={22}>
        <BigTool $w={142}>
          <BigIcon><AddInsIcon /></BigIcon>
          Compléments
        </BigTool>
      </Group>
      <GroupLine />

      <Group $left={22}>
        <BigTool>
          <BigIcon><CopilotIcon /><Chevron /></BigIcon>
          Copilot
        </BigTool>
      </Group>
    </Ribbon>
  );
}

function FormulaRow() {
  const [cell, setCell] = useState('G33');
  return (
    <FormulaBar>
      <NameBox>
        <NameInput aria-label="Zone Nom" value={cell} onChange={(e) => setCell(e.target.value)} />
        <Icon w={14} h={34} stroke="none">
          <path d="M7 1l6 11H1zM7 34l6-11H1z" fill="#5c5c5c" />
        </Icon>
      </NameBox>
      <FormulaTools>
        <FormulaTool aria-label="Annuler la saisie">
          <Icon w={24} h={22} stroke="#c4c4c4" sw={4}><path d="M2 1l20 20M22 1L2 21" /></Icon>
        </FormulaTool>
        <FormulaTool aria-label="Valider">
          <Icon w={28} h={22} stroke="#c4c4c4" sw={4}><path d="M2 12l7 8L26 1" /></Icon>
        </FormulaTool>
        <FormulaTool $w={36}>fx</FormulaTool>
        <FormulaTool $w={24} aria-label="Fonctions">
          <Chevron color="#c4c4c4" />
        </FormulaTool>
      </FormulaTools>
      <FormulaInput aria-label="Barre de formule" />
      <ExpandButton aria-label="Développer">
        <Icon w={14} h={12} stroke="none"><path d="M0 0h14L7 12z" fill="#5c5c5c" /></Icon>
      </ExpandButton>
    </FormulaBar>
  );
}

function Dashboard() {
  const pads = [60, 60, 60, 54, 40, 44];
  return (
    <>
      <TopRow>
        <TitleCard>Tableau de bord RH 2024</TitleCard>
        <KpiStrip>
          {KPIS.map(({ label, value }, i) => (
            <KpiCard key={label} $right={pads[i]}>
              <KpiLabel>{label}</KpiLabel>
              <KpiValue>{value}</KpiValue>
            </KpiCard>
          ))}
          <KpiRing />
          <KpiArrow width="320" height="270" viewBox="2170 540 320 270" aria-hidden="true">
            <path d="M2178 549l61 14-15 17 256 211-6 9-257-211-14 16z" fill={colors.ring} />
          </KpiArrow>
        </KpiStrip>
      </TopRow>

      <Board>
        <Column $grow={586}>
          <DateBanner>Date MàJ : sam. 05/10/2024 à 9h56</DateBanner>
          <FilterPanel>
            <SlicerPair>
              <Slicer title="Ville" items={['Nantes', 'Paris']} cols={1} after={24} />
              <Slicer title="Sexe" items={['Femme', 'Homme']} cols={1} after={24} />
            </SlicerPair>
            <Slicer
              title="Service"
              cols={2}
              after={26}
              items={[
                'Commercial',
                'Développement',
                'Finance',
                'Juridique',
                'Logistique',
                'Marketing',
                'Produit',
                'RH',
                'Stratégie',
              ]}
            />
            <Slicer title="Année (paie)" items={['2022', '2023', '2024']} cols={3} after={20} />
            <Slicer title="Mois (paie)" items={MONTHS} cols={4} />
          </FilterPanel>
        </Column>

        <Column $grow={1066}>
          <ChartCard $h={454}>
            <ChartHead $spread $top={12} $left={71} $right={32}>
              <ChartTitle>Evolution du nombre d'employés</ChartTitle>
              <Callout>26 employés (soit +18%)</Callout>
            </ChartHead>
            <LineChart
              label="Evolution du nombre d'employés"
              data={EMPLOYEES}
              max={35}
              ticks={[35, 30, 25, 20, 15, 10, 5, 0].map((v) => [v, String(v)])}
              left={132}
              right={1034}
              top={18}
              bottom={270}
              height={384}
            />
          </ChartCard>
          <ChartCard $h={453}>
            <ChartHead $spread $top={12} $left={61} $right={32}>
              <ChartTitle>Evolution de la rému totale mensuelle</ChartTitle>
              <Callout>98 586 € (soit +31%)</Callout>
            </ChartHead>
            <LineChart
              label="Evolution de la rému totale mensuelle"
              data={PAY}
              max={120}
              ticks={[120, 100, 80, 60, 40, 20, 0].map((v) => [v, v ? `${v} 000 €` : '0 €'])}
              left={118}
              right={1037}
              top={15}
              bottom={274}
              height={383}
            />
          </ChartCard>
        </Column>

        <Column $grow={539}>
          <ChartCard $h={248}>
            <ChartHead>
              <ChartTitle>Effectif par ville</ChartTitle>
            </ChartHead>
            <BarChart
              label="Effectif par ville"
              rows={[['Paris', 11], ['Nantes', 25]]}
              width={535}
              height={178}
              axis={96}
              top={15}
              pitch={70}
              bar={46}
              unit={13.76}
              tone={colors.purple}
            />
          </ChartCard>
          <ChartCard $h={650}>
            <ChartHead $spread $left={30} $right={43}>
              <ChartTitle>Effectif par service</ChartTitle>
              <Callout>9 distincts</Callout>
            </ChartHead>
            <BarChart
              label="Effectif par service"
              rows={[
                ['Commercial', 7],
                ['Développement', 5],
                ['Finance', 5],
                ['Juridique', 1],
                ['Logistique', 3],
                ['Marketing', 5],
                ['Produit', 4],
                ['RH', 4],
                ['Stratégie', 2],
              ]}
              width={535}
              height={578}
              axis={171}
              top={15}
              pitch={60}
              bar={40}
              unit={42.3}
              tone={colors.blue}
            />
          </ChartCard>
        </Column>

        <Column $grow={538} $left={17}>
          <ChartCard $h={248}>
            <ChartHead>
              <ChartTitle>Effectif par genre</ChartTitle>
            </ChartHead>
            <BarChart
              label="Effectif par genre"
              rows={[['Homme', 22], ['Femme', 14]]}
              width={534}
              height={178}
              axis={102}
              top={15}
              pitch={70}
              bar={46}
              unit={16.3}
              tone={colors.purple}
            />
          </ChartCard>
          <ChartCard $h={306}>
            <ChartHead>
              <ChartTitle>Effectif par tranche d'âges</ChartTitle>
            </ChartHead>
            <AgeChart />
          </ChartCard>
          <ChartCard $h={305}>
            <ChartHead>
              <ChartTitle>Evolution des entrées et sorties</ChartTitle>
            </ChartHead>
            <MovesChart />
          </ChartCard>
        </Column>
      </Board>
    </>
  );
}

function BottomBars() {
  return (
    <>
      <SheetTabs>
        <TabArrows>
          <TabArrow aria-label="Feuille précédente">
            <Icon w={18} h={22} stroke="none"><path d="M16 1v20L2 11z" fill="#4f4f4f" /></Icon>
          </TabArrow>
          <TabArrow aria-label="Feuille suivante">
            <Icon w={18} h={22} stroke="none"><path d="M2 1v20l14-10z" fill="#ababab" /></Icon>
          </TabArrow>
        </TabArrows>
        <TabLine />
        <SheetTab>TABLEAU DE BORD</SheetTab>
        <AddTab aria-label="Ajouter une feuille">
          <Icon w={20} h={20} stroke="#4a4a4a" sw={4}><path d="M10 0v20M0 10h20" /></Icon>
        </AddTab>
        <TabLine />
      </SheetTabs>
      <StatusBar>
        <Ready>Prêt</Ready>
        <StatusButton aria-label="Enregistrer une macro"><Record /></StatusButton>
        <StatusButton>
          <AccessibilityIcon />
          Accessibilité : consultez nos recommandations
        </StatusButton>
        <StatusRight>
          <ViewButton $active $gap={12} aria-label="Affichage normal"><GridViewIcon /></ViewButton>
          <ViewButton $gap={10} aria-label="Mise en page"><PageViewIcon /></ViewButton>
          <ViewButton $gap={6} aria-label="Sauts de page"><BreakViewIcon /></ViewButton>
          <ZoomButton aria-label="Zoom arrière">
            <Icon w={18} h={18} stroke="#555"><path d="M1 9h16" /></Icon>
          </ZoomButton>
          <ZoomSlider type="range" min="0" max="100" defaultValue="53" aria-label="Zoom" />
          <ZoomButton aria-label="Zoom avant">
            <Icon w={18} h={18} stroke="#555"><path d="M1 9h16M9 1v16" /></Icon>
          </ZoomButton>
          <ZoomLevel>120 %</ZoomLevel>
        </StatusRight>
      </StatusBar>
    </>
  );
}

export default function App() {
  const [tab, setTab] = useState('Accueil');

  return (
    <Window>
      <GlobalStyle />
      <TopBar />
      <TabBar>
        {TABS.map((name) => (
          <RibbonTab key={name} $active={name === tab} onClick={() => setTab(name)}>
            {name}
          </RibbonTab>
        ))}
        <TabActions>
          <ActionButton><CommentIcon />Commentaires</ActionButton>
          <ActionButton $primary><ShareIcon />Partager<Chevron color="#fff" /></ActionButton>
        </TabActions>
      </TabBar>
      <RibbonTools />
      <FormulaRow />
      <ColumnHeads>
        <Corner>
          <Icon w={34} h={38} stroke="none"><path d="M34 0v38H0z" fill="#dcdcdc" /></Icon>
        </Corner>
        {COLUMNS.map((name) => (
          <ColumnHead key={name} $narrow={name === 'A'} $active={name === 'G'}>{name}</ColumnHead>
        ))}
      </ColumnHeads>
      <SheetArea>
        <RowHeads>
          {ROWS.map((n) => (
            <RowHead key={n} $active={n === 33}>{n}</RowHead>
          ))}
        </RowHeads>
        <Cells>
          <Dashboard />
          <ActiveCell />
          <ScrollThumb />
        </Cells>
      </SheetArea>
      <BottomBars />
    </Window>
  );
}
